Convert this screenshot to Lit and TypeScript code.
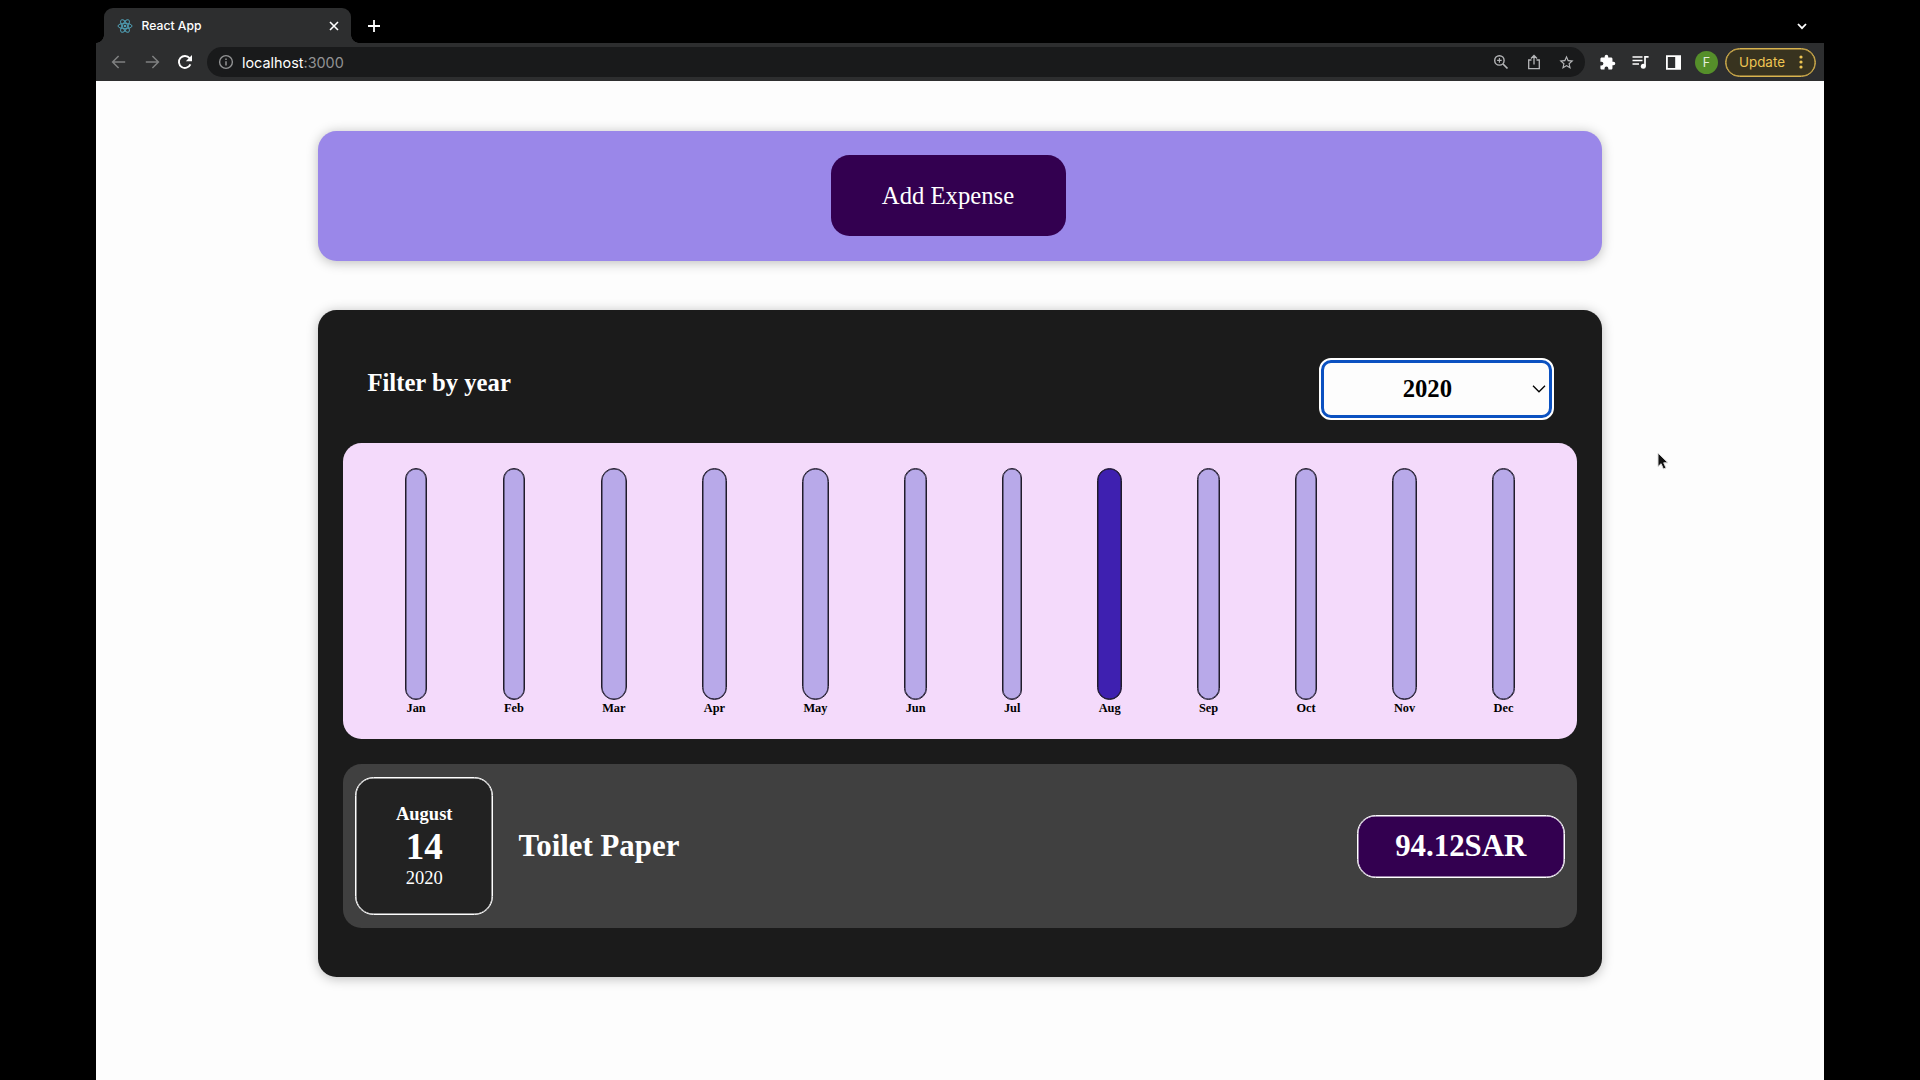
import { LitElement, html, css, svg } from "lit";
import { customElement } from "lit/decorators.js";
import { classMap } from "lit/directives/class-map.js";

const MONTHS = ["Jan", "Feb", "Mar", "Apr", "May", "Jun", "Jul", "Aug", "Sep", "Oct", "Nov", "Dec"];

const line = (d: string, w = 1.5) =>
  svg`<path d=${d} fill="none" stroke="currentColor" stroke-width=${w} stroke-linecap="butt" stroke-linejoin="miter"/>`;

@customElement("browser-chrome")
class BrowserChrome extends LitElement {
  static styles = css`
    :host { display: block; height: 81px; font-family: Inter, "Liberation Sans", sans-serif; color: #fff; }
    svg { display: block; flex: none; }
    .tabs { display: flex; height: 43px; padding: 8px 15px 0 0; box-sizing: border-box; align-items: flex-end; }
    .flare { width: 8px; height: 8px; flex: none; }
    .flare.l { background: radial-gradient(circle at 0 0, transparent 7.5px, #2d2e2f 8px); }
    .flare.r { background: radial-gradient(circle at 100% 0, transparent 7.5px, #2d2e2f 8px); }
    .tab { width: 247px; height: 35px; box-sizing: border-box; background: #2d2e2f; border-radius: 9px 9px 0 0; display: flex; align-items: center; padding: 0 12px 0 13px; }
    .title { flex: 1; margin-left: 8.5px; font-size: 12.2px; letter-spacing: 0; font-weight: 500; line-height: 35px; }
    .plus { align-self: center; margin-left: 8px; }
    .down { align-self: center; margin-left: auto; }
    .bar { display: flex; height: 38px; background: #2d2e2f; align-items: center; padding: 0 8px 0 6px; }
    .cell { width: 33px; display: flex; justify-content: center; flex: none; }
    .dim { color: #7f8081; }
    .soft { color: #b5b6b8; }
    .url { flex: 1; height: 30px; margin: 0 6px; border-radius: 15px; background: #191a1b; display: flex; align-items: center; padding: 0 2px 0 7px; }
    .info { width: 24px; display: flex; justify-content: center; color: #929394; }
    .host { flex: 1; margin-left: 4px; font-size: 14.4px; letter-spacing: 0; }
    .port { color: #929394; }
    .avatar { width: 23px; height: 23px; border-radius: 50%; background: #558f2a; display: flex; align-items: center; justify-content: center; font-size: 12.5px; color: #e6eedf; }
    .update { width: 91px; height: 29px; box-sizing: border-box; border: 1px solid #d9b44f; box-shadow: inset 0 0 0 0.5px #d9b44f; border-radius: 15px; background: #38331f; margin-left: 2px; display: flex; align-items: center; justify-content: space-between; padding: 0 12px 0 13px; font-size: 13.4px; letter-spacing: 0; color: #efc653; }
  `;

  render() {
    return html`
      <div class="tabs">
        <div class="flare l"></div>
        <div class="tab">
          <svg width="16" height="16" viewBox="-8 -8 16 16" fill="none" stroke="#4f9fb5" stroke-width="1">
            <circle r="1.3" fill="#4f9fb5" stroke="none"/>
            <ellipse rx="7" ry="2.7"/><ellipse rx="7" ry="2.7" transform="rotate(60)"/><ellipse rx="7" ry="2.7" transform="rotate(120)"/>
          </svg>
          <span class="title">React App</span>
          <svg width="10" height="10" viewBox="0 0 10 10">${line("M1 1 9 9M9 1 1 9", 1.6)}</svg>
        </div>
        <div class="flare r"></div>
        <svg class="plus" width="14" height="14" viewBox="0 0 14 14">${line("M7 1V13M1 7H13", 1.8)}</svg>
        <svg class="down" width="14" height="10" viewBox="0 0 14 10">${line("M3 3 7 7.2 11 3", 1.8)}</svg>
      </div>
      <div class="bar">
        <div class="cell dim"><svg width="16" height="16" viewBox="0 0 16 16">${line("M14.2 8H1.8M7.6 2 1.6 8 7.6 14")}</svg></div>
        <div class="cell dim"><svg width="16" height="16" viewBox="0 0 16 16">${line("M1.8 8H14.2M8.4 2 14.4 8 8.4 14")}</svg></div>
        <div class="cell"><svg width="16" height="16" viewBox="0 0 16 16">${line("M13.4 10.4A6 6 0 1 1 12.6 4.2", 1.9)}<path d="M15 1V7.2H8.8Z" fill="currentColor"/></svg></div>
        <div class="url">
          <div class="info"><svg width="16" height="16" viewBox="0 0 16 16"><circle cx="8" cy="8" r="6.4" fill="none" stroke="currentColor" stroke-width="1.4"/>${line("M8 7.2V11.4M8 4.6V6")}</svg></div>
          <span class="host">localhost<span class="port">:3000</span></span>
          <div class="cell soft"><svg width="16" height="16" viewBox="0 0 16 16"><circle cx="6.4" cy="6.4" r="4.7" fill="none" stroke="currentColor" stroke-width="1.4"/>${line("M10 10 14.5 14.5", 1.7)}${line("M6.4 4.1V8.7M4.1 6.4H8.7", 1.1)}</svg></div>
          <div class="cell soft"><svg width="16" height="16" viewBox="0 0 16 16">${line("M5.5 6H2.7V14.6H13.3V6H10.5M8 10.5V1.8M5 4.5 8 1.5 11 4.5", 1.3)}</svg></div>
          <div class="cell soft"><svg width="17" height="17" viewBox="0 0 24 24"><path d="M22 9.24l-7.19-.62L12 2 9.19 8.63 2 9.24l5.46 4.73L5.82 21 12 17.27 18.18 21l-1.63-7.03L22 9.24zM12 15.4l-3.76 2.27 1-4.28-3.32-2.88 4.38-.38L12 6.1l1.71 4.04 4.38.38-3.32 2.88 1 4.28L12 15.4z" fill="currentColor"/></svg></div>
        </div>
        <div class="cell"><svg width="17" height="17" viewBox="0 0 24 24"><path fill="currentColor" d="M20.5 11H19V7c0-1.1-.9-2-2-2h-4V3.5a2.5 2.5 0 0 0-5 0V5H4c-1.1 0-2 .9-2 2v3.8h1.5a2.7 2.7 0 0 1 0 5.4H2V20c0 1.1.9 2 2 2h3.8v-1.5a2.7 2.7 0 0 1 5.4 0V22H17c1.1 0 2-.9 2-2v-4h1.5a2.5 2.5 0 0 0 0-5z"/></svg></div>
        <div class="cell"><svg width="17" height="14" viewBox="0 0 17 14">${line("M0.5 2H10.5M0.5 5.5H10.5M0.5 9H7M13 11.2V1.9H16.6", 1.7)}<circle cx="11.3" cy="11.2" r="2.5" fill="currentColor"/></svg></div>
        <div class="cell"><svg width="15" height="15" viewBox="0 0 15 15"><path fill="currentColor" fill-rule="evenodd" d="M0 .3H15V14.7H0ZM1.8 2.1V12.9H9.2V2.1Z"/></svg></div>
        <div class="cell"><div class="avatar">F</div></div>
        <div class="update"><span>Update</span>
          <svg width="4" height="14" viewBox="0 0 4 14" fill="currentColor"><circle cx="2" cy="2" r="1.6"/><circle cx="2" cy="7" r="1.6"/><circle cx="2" cy="12" r="1.6"/></svg>
        </div>
      </div>`;
  }
}

@customElement("expense-chart")
class ExpenseChart extends LitElement {
  static styles = css`
    :host { display: flex; justify-content: space-around; box-sizing: border-box; height: 296px; padding: 24.7px; border-radius: 18.5px; background: #f4dafb; }
    .month { display: flex; flex-direction: column; align-items: stretch; }
    .fill { height: 232.5px; box-sizing: border-box; border: 1px solid #211c2b; box-shadow: inset 0 0 0 0.5px #211c2b; border-radius: 18.5px; background: #b8a9e9; }
    .fill.full { background: #3e20b0; }
    .label { font-size: 12.35px; line-height: 14px; font-weight: 700; text-align: center; padding: 1px 1.54px 0; color: #000; }
  `;

  render() {
    return MONTHS.map(
      (m) => html`<div class="month">
        <div class=${classMap({ fill: true, full: m === "Aug" })}></div>
        <div class="label">${m}</div>
      </div>`
    );
  }
}

@customElement("app-root")
class AppRoot extends LitElement {
  static styles = css`
    :host { display: block; width: 1920px; height: 1080px; overflow: hidden; background: #000; position: relative; font-family: "Liberation Serif", "Times New Roman", serif; }
    .window { width: 1728px; height: 1080px; margin: 0 auto; display: flex; flex-direction: column; }
    .page { flex: 1; background: #fdfdfd; display: flex; flex-direction: column; align-items: center; gap: 49px; padding-top: 49.5px; }
    .card { width: 1284px; box-sizing: border-box; border-radius: 18.5px; box-shadow: 0 1.5px 12px rgba(0, 0, 0, 0.25); }
    .new { height: 130px; background: #9a87e9; display: flex; align-items: center; justify-content: center; padding: 0.5px 24px 0 0; }
    .add { width: 235px; height: 81px; padding: 0; border: 0; border-radius: 18.5px; background: #330050; color: #fff; font: 24.7px "Liberation Serif", serif; }
    .list { height: 667px; background: #1b1b1b; padding: 24.7px; }
    .filter { display: flex; justify-content: space-between; height: 109.3px; box-sizing: border-box; padding: 24.3px 23px 0 24.7px; color: #fff; font-size: 24.7px; font-weight: 700; }
    .filter label { line-height: 28px; margin-top: 11px; }
    .select { width: 235px; height: 62px; box-sizing: border-box; border: 2px solid #fff; border-radius: 12px; background: #fff; }
    .ring { height: 100%; box-sizing: border-box; border: 3px solid #0b51c1; border-radius: 10px; background: #fdfdfd; display: flex; align-items: center; color: #000; padding-right: 3px; }
    .ring span { flex: 1; text-align: center; padding-right: 2px; }
    .item { display: flex; align-items: center; box-sizing: border-box; height: 164px; margin-top: 24.7px; padding: 0 12.3px; border-radius: 18.5px; background: #404040; color: #fff; }
    .date { width: 138.5px; height: 138.5px; box-sizing: border-box; border: 1px solid #fff; box-shadow: inset 0 0 0 0.5px #fff; border-radius: 18.5px; background: #222; display: flex; flex-direction: column; align-items: center; justify-content: center; padding-top: 1px; font-size: 18.5px; line-height: 21px; }
    .m { font-weight: 700; }
    .d { font-weight: 700; font-size: 37px; line-height: 43px; }
    .name { flex: 1; margin: 1px 0 0 25px; font-size: 30.86px; line-height: 35px; font-weight: 700; }
    .price { width: 208.5px; height: 63px; box-sizing: border-box; border: 1px solid #fff; box-shadow: inset 0 0 0 0.5px #fff; border-radius: 18.5px; background: #330050; display: flex; align-items: center; justify-content: center; margin-top: 1px; font-size: 30.86px; font-weight: 700; }
    .cursor { position: absolute; left: 1656px; top: 451px; }
  `;

  render() {
    return html`
      <div class="window">
        <browser-chrome></browser-chrome>
        <main class="page">
          <section class="card new"><button class="add">Add Expense</button></section>
          <section class="card list">
            <div class="filter">
              <label>Filter by year</label>
              <div class="select"><div class="ring"><span>2020</span>
                <svg width="14" height="8" viewBox="0 0 14 8">${line("M1 .8 7 6.8 13 .8", 1.3)}</svg>
              </div></div>
            </div>
            <expense-chart></expense-chart>
            <div class="item">
              <div class="date"><span class="m">August</span><span class="d">14</span><span class="y">2020</span></div>
              <h2 class="name">Toilet Paper</h2>
              <div class="price">94.12SAR</div>
            </div>
          </section>
        </main>
      </div>
      <svg class="cursor" width="15" height="21" viewBox="0 0 15 21">
        <path d="M2 2V15.6L5.1 12.7 7.4 18 10 16.9 7.7 11.8H12Z" fill="#111" stroke="#ddd" stroke-width="1"/>
      </svg>`;
  }
}
